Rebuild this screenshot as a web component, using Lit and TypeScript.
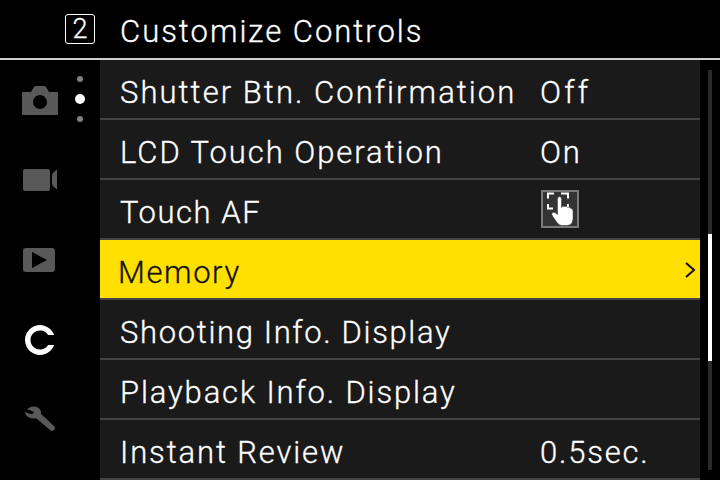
import { LitElement, html, css, svg } from "lit";
import { customElement } from "lit/decorators.js";

const rows: { label: string; value?: string; kind?: string; track: number; valueTrack?: number }[] = [
  { label: "Shutter Btn. Confirmation", value: "Off", track: 2.05, valueTrack: 3.2 },
  { label: "LCD Touch Operation", value: "On", track: 1.95, valueTrack: 1.8 },
  { label: "Touch AF", kind: "touch", track: 1.55 },
  { label: "Memory", kind: "selected", track: 1.6 },
  { label: "Shooting Info. Display", track: 1.65 },
  { label: "Playback Info. Display", track: 1.85 },
  { label: "Instant Review", value: "0.5sec.", track: 1.87, valueTrack: 1.8 },
];

const camera = svg`<svg class="icon" width="38" height="32" viewBox="0 0 38 32"><path fill-rule="evenodd" fill="#595959" d="M2 8H10L13 3Q13.500 2 15 2H23Q24.500 2 25 3L28 8H36Q37 8 37 9V30Q37 31 36 31H2Q1 31 1 30V9Q1 8 2 8ZM19 11A7 7 0 1 0 19 25A7 7 0 1 0 19 11Z"/></svg>`;
const video = svg`<svg class="icon" width="38" height="32" viewBox="0 0 38 32"><rect x="2" y="5" width="27" height="22" rx="2" fill="#595959"/><path fill="#595959" d="M36 5.500V25.500L33 23Q31 21.500 31 20V11Q31 9.500 33 8Z"/></svg>`;
const play = svg`<svg class="icon" width="38" height="32" viewBox="0 0 38 32"><path fill-rule="evenodd" fill="#595959" d="M5 4H31Q34 4 34 7V25Q34 28 31 28H5Q2 28 2 25V7Q2 4 5 4ZM11 8V24L26 16Z"/></svg>`;
const custom = svg`<svg class="icon" width="38" height="38" viewBox="0 0 38 38"><path fill="#fff" d="M33.140 14A15 15 0 1 0 33.140 24H27.080A9.500 9.500 0 1 1 27.080 14Z"/></svg>`;
const wrench = svg`<svg class="icon" width="38" height="34" viewBox="0 0 38 34"><path fill="#595959" d="M4 9L11 11.500L13 9L6 6Q11 2.500 16 4Q20.500 6 20 11L33 23Q35 25.500 33 27Q31 29 29 27L15.500 15.500Q10.500 16 7 14Q4.500 12.500 4 9Z"/></svg>`;
const touch = svg`<svg width="38" height="38" viewBox="0 0 38 38" class="touch"><rect x="1" y="1" width="36" height="36" fill="#333" stroke="#7a7a7a" stroke-width="2"/><path fill="none" stroke="#fff" stroke-width="2" d="M7 8.500V3.500H13M20 3.500H27V8.500M7 14V18.500H12M27 14V18"/><path fill="#fff" stroke="#333" stroke-width="0.500" d="M16.500 9Q16.500 6.500 18.500 6.500Q20.500 6.500 20.500 9V17.500Q22 15.500 23.500 16.500Q25.500 15.500 26.500 17.500Q28.500 16.500 30 18.500Q32 18.500 32 21.500V29Q31.500 35 26 35.500H21Q18 35.500 16 32.500L11.500 26Q10 24 11.500 22.500Q13.500 21.500 16.500 24.500Z"/></svg>`;

@customElement("app-root")
export class AppRoot extends LitElement {
  static styles = css`
    :host { display: block; width: 720px; height: 480px; overflow: hidden; background: #000; color: #fff;
      font-family: Roboto, "Liberation Sans", sans-serif; font-size: 31px; font-weight: 300; letter-spacing: 1.8px; -webkit-text-stroke: 0.3px currentColor; }
    .header { height: 58px; display: flex; align-items: center; border-bottom: 2px solid #cfcfcf; box-sizing: content-box; }
    .tab { width: 30px; height: 30px; box-sizing: border-box; margin: 0 25px 0 65px; border: 1px solid #fff; border-radius: 3px;
      display: flex; align-items: center; justify-content: center; font-size: 27px; letter-spacing: 0; line-height: 1; }
    .title { line-height: 1; margin-top: 4px; letter-spacing: 2px; }
    .main { display: flex; height: 420px; }
    .side { width: 100px; flex: none; position: relative; display: flex; flex-direction: column; }
    .cat { height: 80px; display: flex; align-items: center; padding-left: 21px; box-sizing: border-box; flex: none; }
    .dots { position: absolute; left: 76px; top: 16px; display: flex; flex-direction: column; align-items: center; width: 8px; gap: 14px; }
    .dot { width: 6px; height: 6px; border-radius: 50%; background: #808080; }
    .dot.on { width: 10px; height: 10px; background: #fff; margin: -2px 0; }
    .list { width: 600px; flex: none; background: #1a1a1a; }
    .row { height: 60px; box-sizing: border-box; border-bottom: 2px solid #444; display: flex; align-items: center; padding-left: 20px; position: relative; }
    .row.selected { background: #ffe000; color: #111; padding-left: 18px; }
    .label { width: 420px; flex: none; line-height: 1; padding-top: 6px; }
    .value { line-height: 1; padding-top: 6px; }
    .touch { display: block; margin-top: -1px; margin-left: 1px; }
    .chev { position: absolute; right: 4px; top: 21px; }
    .bar { flex: 1; position: relative; }
    .track { position: absolute; left: 8px; top: 10px; width: 4px; height: 400px; background: #2b2b2b; }
    .thumb { position: absolute; left: 0; top: 164px; width: 4px; height: 127px; background: #fff; }
  `;

  render() {
    return html`
      <div class="header"><div class="tab">2</div><div class="title">Customize Controls</div></div>
      <div class="main">
        <div class="side">
          <div class="cat">${camera}</div>
          <div class="cat">${video}</div>
          <div class="cat">${play}</div>
          <div class="cat">${custom}</div>
          <div class="cat">${wrench}</div>
          <div class="dots"><div class="dot"></div><div class="dot on"></div><div class="dot"></div></div>
        </div>
        <div class="list">
          ${rows.map((r) => html`<div class="row ${r.kind === "selected" ? "selected" : ""}">
            <div class="label" style="letter-spacing:${r.track}px">${r.label}</div>
            ${r.value ? html`<div class="value" style="letter-spacing:${r.valueTrack}px">${r.value}</div>` : ""}
            ${r.kind === "touch" ? touch : ""}
            ${r.kind === "selected" ? html`<svg class="chev" width="12" height="18" viewBox="0 0 12 18"><path d="M2 2L10 9L2 16" fill="none" stroke="#111" stroke-width="2"/></svg>` : ""}
          </div>`)}
        </div>
        <div class="bar"><div class="track"><div class="thumb"></div></div></div>
      </div>
    `;
  }
}
